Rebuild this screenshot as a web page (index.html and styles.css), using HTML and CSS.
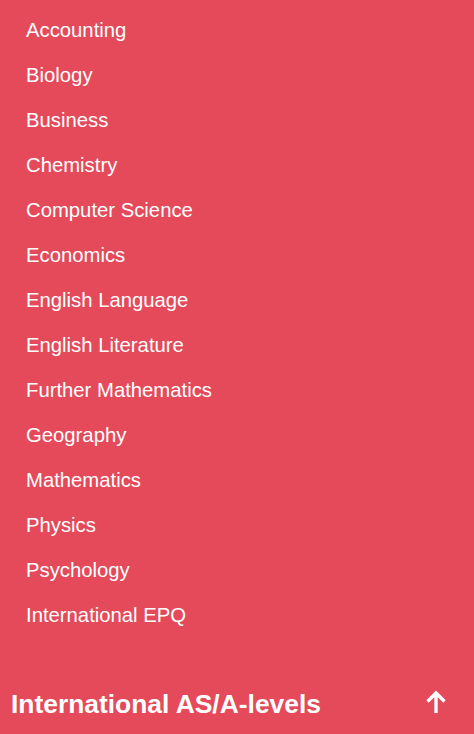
FILE: index.html
```html
<!DOCTYPE html>
<html>
<head>
<meta charset="utf-8">
<link rel="stylesheet" href="styles.css">
</head>
<body>
<div class="panel">
  <ul class="subjects">
    <li>Accounting</li>
    <li>Biology</li>
    <li>Business</li>
    <li>Chemistry</li>
    <li>Computer Science</li>
    <li>Economics</li>
    <li>English Language</li>
    <li>English Literature</li>
    <li>Further Mathematics</li>
    <li>Geography</li>
    <li>Mathematics</li>
    <li>Physics</li>
    <li>Psychology</li>
    <li>International EPQ</li>
  </ul>
  <div class="section-head">
    <span class="section-title">International AS/A-levels</span>
    <svg class="arrow" width="24" height="26" viewBox="0 0 24 26"><path d="M12 24V4M3.5 12.5L12 4l8.5 8.5" fill="none" stroke="#fff" stroke-width="3.4" stroke-linejoin="miter"/></svg>
  </div>
</div>
</body>
</html>
```
FILE: styles.css
```css
html, body {
  margin: 0;
  padding: 0;
  background: #e44a5a;
}
.panel {
  font-family: "Liberation Sans", Arial, sans-serif;
  color: #fff;
  height: 734px;
  overflow: hidden;
}
.subjects {
  list-style: none;
  margin: 0;
  padding: 8px 0 0 26px;
}
.subjects li {
  font-size: 20.3px;
  line-height: 45px;
  height: 45px;
}
.section-head {
  margin-top: 46px;
  display: flex;
  align-items: center;
  justify-content: space-between;
  padding: 0 26px 0 11px;
  height: 40px;
}
.section-title {
  font-size: 26.4px;
  font-weight: bold;
}
.arrow {
  display: block;
  margin-top: -4px;
}
```
